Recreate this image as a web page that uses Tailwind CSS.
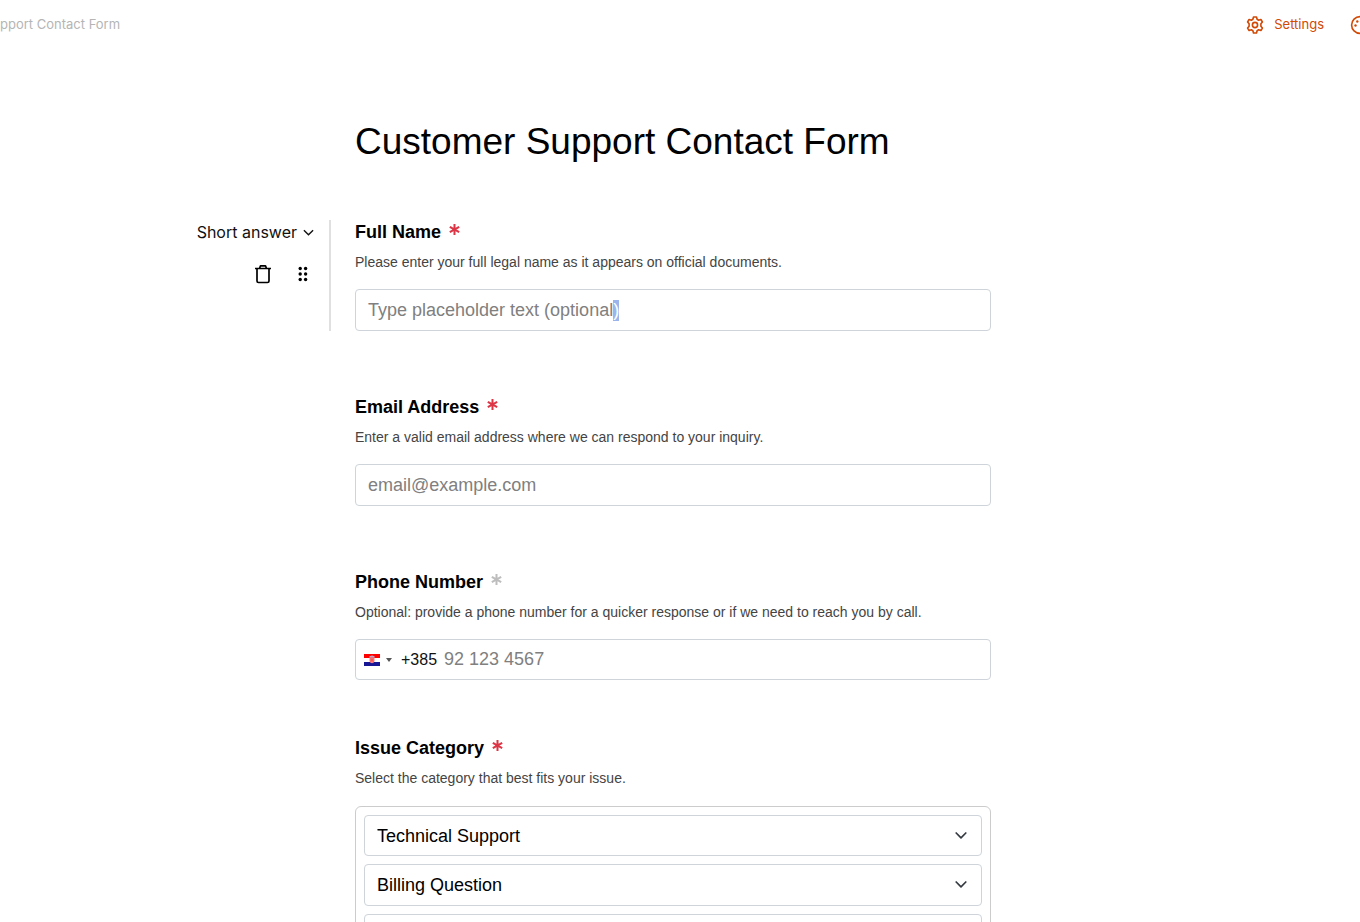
<!DOCTYPE html>
<html lang="en">
  <head>
    <meta charset="utf-8" />
    <meta name="viewport" content="width=device-width, initial-scale=1" />
    <title>Customer Support Contact Form</title>
    <script src="https://cdn.jsdelivr.net/npm/@tailwindcss/browser@4"></script>
  </head>

  <body class="h-screen overflow-hidden bg-white font-['Liberation_Sans',Arial,sans-serif] text-black">
    <!-- Top bar -->
    <header class="flex h-[50px] items-center justify-between overflow-hidden font-['Inter',sans-serif] text-[13px]">
      <span class="whitespace-nowrap text-[#b5b5b5]">pport Contact Form</span>
      <nav class="-mr-[10px] flex shrink-0 items-center gap-[26px] text-[#d14905]">
        <a href="#settings" class="flex items-center gap-[10px]">
          <svg class="size-[18px]" viewBox="0 0 18 18" fill="none" stroke="currentColor" stroke-width="1.6" stroke-linejoin="round">
            <path d="M7.500 1h3l.6 2.300 1.500.9 2.300-.7L16.400 6l-1.500 1.800v2.400l1.500 1.800-1.500 2.500-2.300-.7-1.500.9-.6 2.300h-3l-.6-2.300-1.500-.9-2.300.7L1.600 12l1.500-1.800V7.800L1.600 6l1.500-2.500 2.300.7 1.500-.9z" />
            <circle cx="9" cy="9" r="2.600" />
          </svg>
          Settings
        </a>
        <button type="button" aria-label="Theme">
          <svg class="size-5" viewBox="0 0 20 20" fill="none" stroke="currentColor" stroke-width="1.600">
            <circle cx="10" cy="10" r="8.400" />
            <circle cx="5.500" cy="10.500" r="1.200" fill="currentColor" stroke="none" />
            <circle cx="7.300" cy="6.500" r="1.200" fill="currentColor" stroke="none" />
          </svg>
        </button>
      </nav>
    </header>

    <!-- Editor: block tools on the left, form in the middle -->
    <main class="grid grid-cols-[1fr_minmax(0,636px)_1fr] pt-16 pr-[14px]">
      <h1 class="col-start-2 text-[37px] leading-[56px]">Customer Support Contact Form</h1>

      <aside class="col-start-1 mt-[50px] mr-6 h-[111px] justify-self-end border-r-2 border-[#e0e0e0] pr-[15px] font-['Inter',sans-serif]">
        <button type="button" class="flex h-6 items-center gap-[6px] text-base text-[#111]">
          Short answer
          <svg class="size-[11px]" viewBox="0 0 12 12" fill="none" stroke="currentColor" stroke-width="1.500">
            <path d="M1 3.500 6 8.500 11 3.500" />
          </svg>
        </button>
        <div class="mt-5 flex items-center justify-end gap-[25px] pr-[6px]">
          <button type="button" aria-label="Delete">
            <svg class="size-5" viewBox="0 0 20 20" fill="none" stroke="currentColor" stroke-width="1.700" stroke-linejoin="round">
              <path d="M2 4.500h16M4 4.500V17q0 1.500 1.500 1.500h9q1.500 0 1.500-1.500V4.500M6.500 4.500 7.500 1.800h5l1 2.700" />
            </svg>
          </button>
          <button type="button" aria-label="Move">
            <svg class="h-4 w-[10px]" viewBox="0 0 10 16" fill="currentColor">
              <circle cx="2.200" cy="2.500" r="1.700" />
              <circle cx="7.600" cy="2.500" r="1.700" />
              <circle cx="2.200" cy="8" r="1.700" />
              <circle cx="7.600" cy="8" r="1.700" />
              <circle cx="2.200" cy="13.500" r="1.700" />
              <circle cx="7.600" cy="13.500" r="1.700" />
            </svg>
          </button>
        </div>
      </aside>

      <form class="col-start-2 mt-[50px]">
        <div class="mb-16">
          <label for="full-name" class="flex h-6 items-center gap-2 text-lg font-bold">
            Full Name
            <svg class="mb-[6px] size-[11px] text-[#dc3545]" viewBox="0 0 11 11" stroke="currentColor" stroke-width="2"><path d="M5.500 0v11M.800 2.800l9.400 5.400M.800 8.200l9.400-5.400" /></svg>
          </label>
          <p class="mt-2 text-sm text-[#444]">Please enter your full legal name as it appears on official documents.</p>
          <input id="full-name" type="text" value="Type placeholder text (optional)" class="mt-[17px] block h-[42px] w-full rounded-[4px] border border-[#ced4da] px-3 text-lg text-[#808080] outline-none selection:bg-[#9bb5ec] selection:text-white" />
        </div>

        <div class="mb-16">
          <label for="email" class="flex h-6 items-center gap-2 text-lg font-bold">
            Email Address
            <svg class="mb-[6px] size-[11px] text-[#dc3545]" viewBox="0 0 11 11" stroke="currentColor" stroke-width="2"><path d="M5.500 0v11M.800 2.800l9.400 5.400M.800 8.200l9.400-5.400" /></svg>
          </label>
          <p class="mt-2 text-sm text-[#444]">Enter a valid email address where we can respond to your inquiry.</p>
          <input id="email" type="email" placeholder="email@example.com" class="mt-[17px] block h-[42px] w-full rounded-[4px] border border-[#ced4da] px-3 text-lg outline-none placeholder:text-[#808080]" />
        </div>

        <div class="mb-14">
          <label for="phone" class="flex h-6 items-center gap-2 text-lg font-bold">
            Phone Number
            <svg class="mb-[6px] size-[11px] text-[#bdbdbd]" viewBox="0 0 11 11" stroke="currentColor" stroke-width="2"><path d="M5.500 0v11M.800 2.800l9.400 5.400M.800 8.200l9.400-5.400" /></svg>
          </label>
          <p class="mt-2 text-sm text-[#444]">Optional: provide a phone number for a quicker response or if we need to reach you by call.</p>
          <div class="mt-[17px] flex h-[41px] items-center rounded-[4px] border border-[#ced4da] pl-2">
            <button type="button" aria-label="Country" class="flex items-center gap-[6px]">
              <svg class="h-3 w-4" viewBox="0 0 16 12">
                <path fill="#f00" d="M0 0h16v4H0z" />
                <path fill="#fff" d="M0 4h16v4H0z" />
                <path fill="#171796" d="M0 8h16v4H0z" />
                <path fill="#ff8080" d="M5.500 3.500h5V7q0 2-2.500 2.300Q5.500 9 5.500 7z" />
                <path fill="#b8a9c9" d="m5.300 3.500.2-1.300L8 1.500l2.500.7.2 1.300z" />
                <path fill="#e33" d="M6.500 4.500h1v1h-1zm2 0h1v1h-1zm-1 1h1v1h-1zm-1 1h1v1h-1zm2 0h1v1h-1z" />
              </svg>
              <svg class="h-1 w-[6px]" viewBox="0 0 6 4" fill="#555"><path d="M0 0h6L3 4z" /></svg>
            </button>
            <span class="ml-[9px] text-base text-[#111]">+385</span>
            <input id="phone" type="tel" placeholder="92 123 4567" class="ml-[7px] h-full min-w-0 flex-1 text-lg outline-none placeholder:text-[#808080]" />
          </div>
        </div>

        <fieldset>
          <legend class="flex h-6 items-center gap-2 text-lg font-bold">
            Issue Category
            <svg class="mb-[6px] size-[11px] text-[#dc3545]" viewBox="0 0 11 11" stroke="currentColor" stroke-width="2"><path d="M5.500 0v11M.800 2.800l9.400 5.400M.800 8.200l9.400-5.400" /></svg>
          </legend>
          <p class="mt-2 text-sm text-[#444]">Select the category that best fits your issue.</p>
          <div class="mt-[18px] grid gap-2 rounded-md border border-[#ccc] p-2">
            <div class="grid items-center">
              <select aria-label="Option 1" class="col-start-1 row-start-1 h-[41px] appearance-none rounded-[4px] border border-[#ced4da] px-3 text-lg">
                <option>Technical Support</option>
              </select>
              <svg class="pointer-events-none col-start-1 row-start-1 mr-[15px] size-3 justify-self-end" viewBox="0 0 12 12" fill="none" stroke="#343a40" stroke-width="1.700" stroke-linecap="round" stroke-linejoin="round"><path d="M1.200 3 6 7.800 10.800 3" /></svg>
            </div>
            <div class="grid items-center">
              <select aria-label="Option 2" class="col-start-1 row-start-1 h-[42px] appearance-none rounded-[4px] border border-[#ced4da] px-3 text-lg">
                <option>Billing Question</option>
              </select>
              <svg class="pointer-events-none col-start-1 row-start-1 mr-[15px] size-3 justify-self-end" viewBox="0 0 12 12" fill="none" stroke="#343a40" stroke-width="1.700" stroke-linecap="round" stroke-linejoin="round"><path d="M1.200 3 6 7.800 10.800 3" /></svg>
            </div>
            <select aria-label="Option 3" class="h-[42px] appearance-none rounded-[4px] border border-[#ced4da] px-3 text-lg"></select>
          </div>
        </fieldset>
      </form>
    </main>

    <script>
      const nameInput = document.getElementById('full-name');
      nameInput.focus({ preventScroll: true });
      nameInput.setSelectionRange(nameInput.value.length - 1, nameInput.value.length);
    </script>
  </body>
</html>
